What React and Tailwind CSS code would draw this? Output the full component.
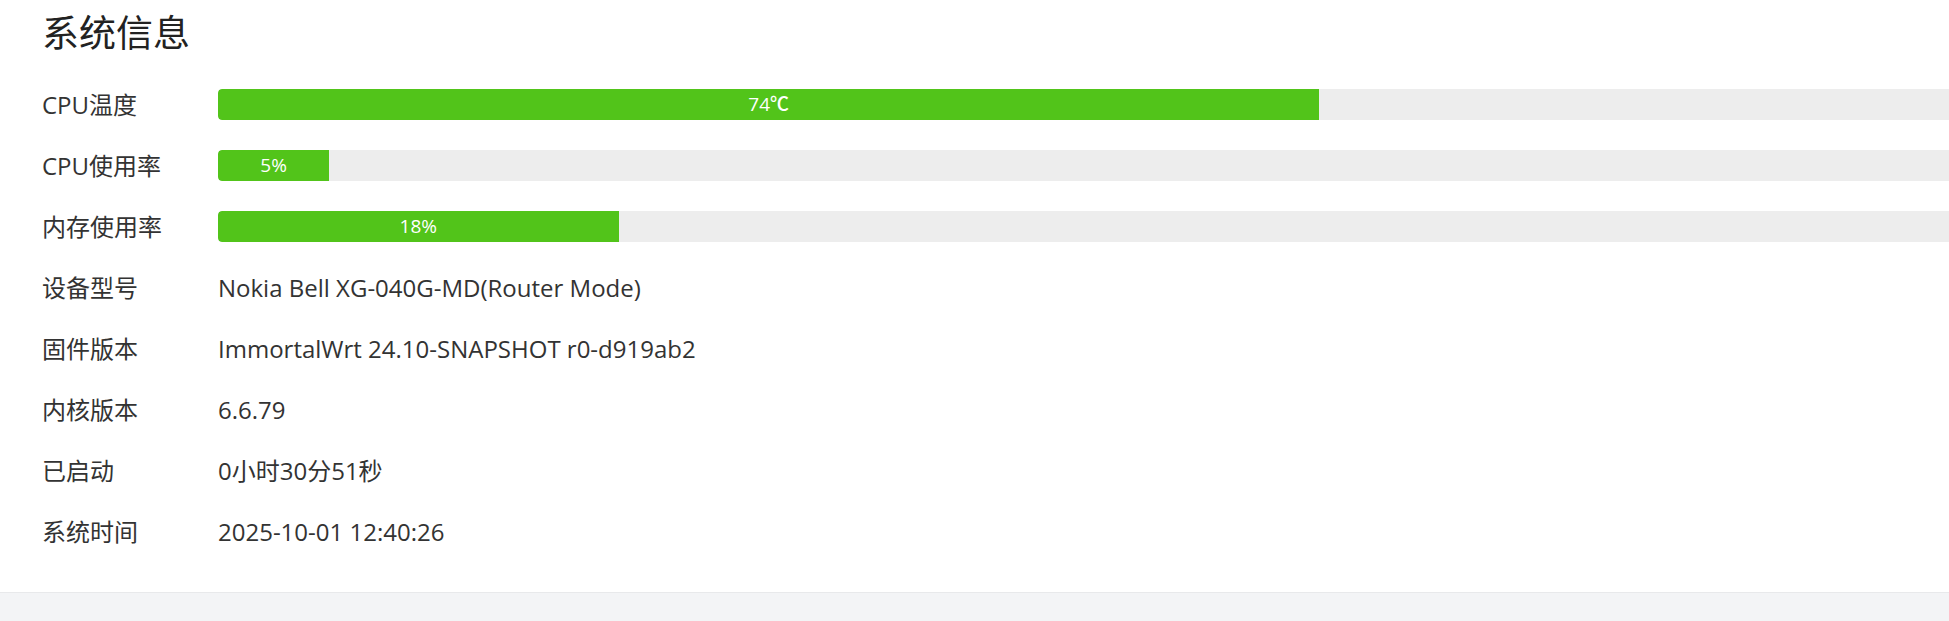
const bars = [
  { label: "CPU温度", text: "74℃", pct: 49.5 },
  { label: "CPU使用率", text: "5%", pct: 5 },
  { label: "内存使用率", text: "18%", pct: 18 },
];

const infos = [
  { label: "设备型号", value: "Nokia Bell XG-040G-MD(Router Mode)" },
  { label: "固件版本", value: "ImmortalWrt 24.10-SNAPSHOT r0-d919ab2" },
  { label: "内核版本", value: "6.6.79" },
  { label: "已启动", value: "0小时30分51秒" },
  { label: "系统时间", value: "2025-10-01 12:40:26" },
];

export default function App() {
  return (
    <div
      className="min-h-screen w-full overflow-hidden bg-[#f3f4f6]"
      style={{ fontFamily: "'Open Sans', 'Noto Sans CJK SC', sans-serif" }}
    >
      <div className="bg-white pl-[42px] pt-[9px] pb-[30px] border-b border-[#e8e9eb]">
        <h2 className="text-[37px] leading-[48px] text-[#222]">系统信息</h2>

        <div className="mt-[17px] flex flex-col">
          {/* 进度条 */}
          {bars.map((bar) => (
            <div key={bar.label} className="flex h-[61px] items-center">
              <div className="w-[176px] shrink-0 text-[24px] text-[#333]">
                {bar.label}
              </div>
              <div className="h-[31px] w-[2225px] shrink-0 overflow-hidden rounded-[4px] bg-[#ededed]">
                <div
                  className="flex h-full items-center justify-center rounded-l-[4px] bg-[#52c41a] text-[19px] font-medium text-white"
                  style={{ width: `${bar.pct}%` }}
                >
                  {bar.text}
                </div>
              </div>
            </div>
          ))}

          {infos.map((item) => (
            <div key={item.label} className="flex h-[61px] items-center">
              <div className="w-[176px] shrink-0 text-[24px] text-[#333]">
                {item.label}
              </div>
              <div className="text-[24px] text-[#333]">{item.value}</div>
            </div>
          ))}
        </div>
      </div>
    </div>
  );
}
